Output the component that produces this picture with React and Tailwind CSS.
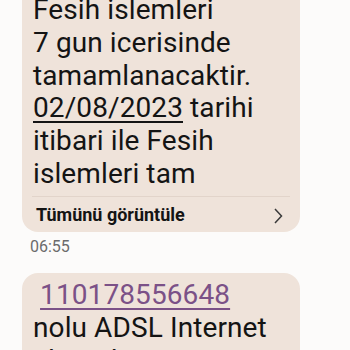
export default function App() {
  return (
    <div className="w-[350px] h-[350px] overflow-hidden bg-[#fcfbfa] font-['Roboto',sans-serif]">
      <div className="ml-[22px] w-[278px] -mt-[6px] rounded-b-[16px] bg-[#efe3da] px-[11px]">
        <div className="text-[28px] leading-[32.8px] text-[#141414] tracking-[0.1px]">
          Fesih islemleri
          <br />7 gun icerisinde
          <br />tamamlanacaktir.
          <br />
          <span className="underline decoration-[2px] underline-offset-[4px]">02/08/2023</span> tarihi
          <br />itibari ile Fesih
          <br />islemleri tam
        </div>
        <div className="mt-[5px] h-px bg-[#e2d4ca] -mx-px" />
        <div className="flex items-start justify-between h-[35px] pt-[8px]">
          <span className="text-[18px] leading-[20px] font-bold text-[#141414] pl-[3px]">Tümünü görüntüle</span>
          <svg width="10" height="16" viewBox="0 0 10 16" className="mt-[3px] mr-[6px]">
            <path d="M2 1 L8.5 8 L2 15" fill="none" stroke="#3a3a3a" strokeWidth="1.5" />
          </svg>
        </div>
      </div>
      <div className="ml-[30px] mt-[5px] text-[16px] leading-[20px] text-[#6b6b6b]">06:55</div>
      <div className="ml-[22px] w-[278px] mt-[16px] rounded-[16px] bg-[#efe3da] px-[11px] pt-[5px] pb-4">
        <div className="text-[28px] leading-[33px] text-[#141414] tracking-[0.1px]">
          {"\u00a0"}
          <span className="text-[#7b5187] underline decoration-[2px] underline-offset-[4px]">110178556648</span>
          <br />nolu ADSL Internet
          <br />aboneliginiz
        </div>
      </div>
    </div>
  );
}
